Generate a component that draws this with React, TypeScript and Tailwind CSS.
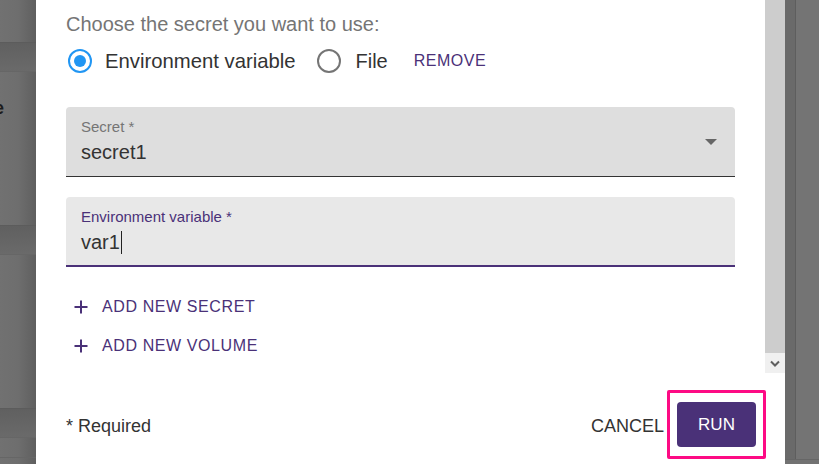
import React from "react";

const font = { fontFamily: '"Liberation Sans", Arial, sans-serif' };

function PlusIcon() {
  return (
    <svg width="14" height="14" viewBox="0 0 14 14" className="shrink-0">
      <path d="M7 0.5V13.5M0.5 7H13.5" stroke="#4a3178" strokeWidth="2" />
    </svg>
  );
}

export default function App() {
  return (
    <div className="w-[819px] h-[464px] flex overflow-hidden bg-[#707070]" style={font}>
      {/* left background */}
      <div className="w-[36px] h-full relative flex flex-col bg-gradient-to-r from-[#717171] via-[#6e6e6e] to-[#5f5f5f]">
        <div className="h-[42px]" />
        <div className="h-[30px] border-t border-[#5c5c5c] bg-gradient-to-b from-[#606060] to-[#6a6a6a] border-b border-b-[#666]" />
        <div className="h-[153px] relative overflow-hidden">
          <span className="absolute left-[-6px] top-[26px] text-[18px] leading-[20px] font-bold text-[#1c1c1c]">e</span>
        </div>
        <div className="h-[30px] border-t border-[#5c5c5c] bg-gradient-to-b from-[#606060] to-[#6a6a6a] border-b border-b-[#666]" />
        <div className="h-[153px]" />
        <div className="h-[30px] border-t border-[#5c5c5c] bg-gradient-to-b from-[#606060] to-[#6a6a6a] border-b border-b-[#666]" />
        <div className="h-[20px] border-b border-[#666]" />
      </div>

      {/* dialog */}
      <div className="w-[749px] h-full bg-white flex flex-col">
        <div className="h-[373px] flex">
          <div className="flex-1 pl-[30px] pr-[30px] flex flex-col">
            <div className="mt-[12px] text-[20px] leading-[24px] text-[#757575]">Choose the secret you want to use:</div>
            <div className="mt-[13px] h-[24px] flex items-center">
              <div className="w-[28px] h-[28px] flex items-center justify-center">
                <div className="w-[24px] h-[24px] rounded-full border-[2.5px] border-[#2196f3] flex items-center justify-center">
                  <div className="w-[12px] h-[12px] rounded-full bg-[#2196f3]" />
                </div>
              </div>
              <span className="ml-[11px] text-[20.3px] text-[#333333]">Environment variable</span>
              <div className="ml-[21px] w-[24px] h-[24px] rounded-full border-[2.5px] border-[#757575]" />
              <span className="ml-[15px] text-[20px] text-[#333333]">File</span>
              <span className="ml-[26px] text-[16px] tracking-[0.5px] text-[#4a3178]">REMOVE</span>
            </div>

            <div className="mt-[34px] h-[70px] bg-[#dedede] rounded-t-[4px] border-b border-[#333] relative px-[15px]">
              <div className="pt-[12px] text-[15px] leading-[16px] text-[#757575]">Secret *</div>
              <div className="mt-[5px] text-[20px] leading-[24px] text-[#333333]">secret1</div>
              <svg className="absolute right-[18px] top-[32px]" width="12" height="6" viewBox="0 0 12 6">
                <path d="M0 0H12L6 6Z" fill="#666" />
              </svg>
            </div>

            <div className="mt-[20px] h-[70px] bg-[#e8e8e8] rounded-t-[4px] border-b-2 border-[#4a3178] px-[15px]">
              <div className="pt-[12px] text-[15px] leading-[16px] text-[#4a3178]">Environment variable *</div>
              <div className="mt-[5px] text-[20px] leading-[24px] text-[#333333] flex items-center">
                var1<span className="inline-block w-[1px] h-[23px] bg-[#222] ml-[1px]" />
              </div>
            </div>

            <div className="mt-[30px] flex items-center h-[20px] pl-[8px]">
              <PlusIcon />
              <span className="ml-[14px] text-[16px] tracking-[0.6px] text-[#4a3178]">ADD NEW SECRET</span>
            </div>
            <div className="mt-[19px] flex items-center h-[20px] pl-[8px]">
              <PlusIcon />
              <span className="ml-[14px] text-[16px] tracking-[0.6px] text-[#4a3178]">ADD NEW VOLUME</span>
            </div>
          </div>
          {/* scrollbar */}
          <div className="w-[20px] h-full flex flex-col">
            <div className="flex-1 bg-[#cdcdcd]" />
            <div className="h-[20px] bg-[#f0f0f0] flex items-center justify-center">
              <svg width="10" height="7" viewBox="0 0 10 7">
                <path d="M1 1.5L5 5.5L9 1.5" stroke="#5f5f5f" strokeWidth="2" fill="none" />
              </svg>
            </div>
          </div>
        </div>

        <div className="flex-1 flex items-center pl-[30px] pr-[19px]">
          <span className="text-[18px] text-[#333333] mt-[16px]">* Required</span>
          <div className="flex-1" />
          <span className="text-[18px] text-[#333333] mt-[16px] mr-[3px]">CANCEL</span>
          <div className="w-[99px] h-[69px] border-[3px] border-[#fd0a84] rounded-[2px] flex items-center justify-center mt-[12px]">
            <div className="w-[79px] h-[45px] bg-[#4a3178] rounded-[4px] flex items-center justify-center text-white text-[17px]">
              RUN
            </div>
          </div>
        </div>
      </div>

      {/* right background */}
      <div className="flex-1 h-full flex flex-col">
        <div className="flex-1 flex">
          <div className="w-[11px] bg-[#6a6a6a] border-r border-[#5e5e5e]" />
          <div className="flex-1 bg-[#747474]" />
        </div>
        <div className="h-[5px] border-t border-[#666] bg-[#727272]" />
      </div>
    </div>
  );
}
